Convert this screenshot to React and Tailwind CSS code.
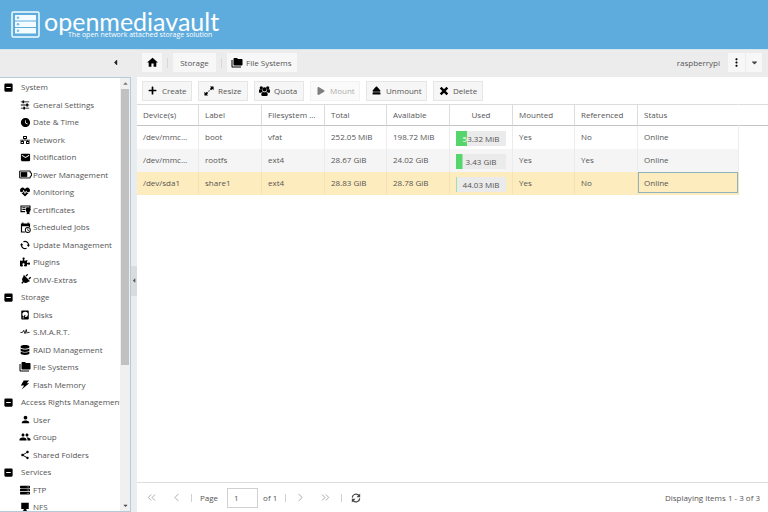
import { useState } from 'react';
import {
    MdWatchLater, MdEmail, MdPerson, MdGroup, MdShare, MdFolderCopy, MdHome, MdMoreVert,
} from 'react-icons/md';
import {
    FaNetworkWired, FaHeartbeat, FaPlug, FaPuzzlePiece, FaDatabase, FaServer, FaPlus,
    FaEject, FaPlay, FaCaretDown, FaCaretLeft, FaCaretUp,
} from 'react-icons/fa';
import { ChevronLeft, ChevronRight, ChevronsLeft, ChevronsRight } from 'lucide-react';

function Icon({ children, className = 'size-[10px]' }) {
    return (
        <svg viewBox="0 0 24 24" fill="currentColor" className={className} aria-hidden="true">
            {children}
        </svg>
    );
}

const SlidersIcon = () => (
    <Icon>
        <path d="M2 3.500h20v2H2zM2 11h20v2H2zM2 18.500h20v2H2z" />
        <path d="M6 1h4v7H6zM15 8.500h4v7h-4zM8 16h4v7H8z" />
    </Icon>
);

const BatteryIcon = () => (
    <svg viewBox="0 0 30 20" className="h-[9px] w-[13px] shrink-0" aria-hidden="true">
        <path d="M1.500 2h24.500v4.500H29v7h-3V18H1.500z" fill="none" stroke="currentColor" strokeWidth="2.200" />
        <path d="M4 4.500h15v11H4z" fill="currentColor" />
    </svg>
);

const CertificateIcon = () => (
    <Icon className="size-[11px]">
        <path d="M1 3h22v7h-2.500V5.500h-17V15H11v3H1z" />
        <path d="M5 7h7v2.200H5zM5 11h6v2.200H5z" />
        <path d="M17 6l2 1.500 2.500-.3.500 2.500 2 1.800-1.500 2 .2 2.500-2 .8V23l-3-2-3 2v-6.200l-2-.8.2-2.500-1.400-2 1.800-1.800.5-2.500 2.500.3z" />
    </Icon>
);

const CalendarClockIcon = () => (
    <Icon className="size-[11px]">
        <path fillRule="evenodd" d="M5 1h2.500v2h9V1H19v2h3v8.500a7 7 0 0 0-3-1.300V9H4.500v11.500H10l1.500 2.500H2V3h3z" />
        <path fillRule="evenodd" d="M17 11a6.500 6.500 0 1 1 0 13 6.500 6.500 0 0 1 0-13zm0 2a4.500 4.500 0 1 0 0 9 4.500 4.500 0 0 0 0-9z" />
        <path d="M16.200 14h1.600v3l2.500 1.500-.8 1.400-3.300-2z" />
    </Icon>
);

const UpdateIcon = () => (
    <Icon>
        <path d="M8 4.500A8.500 8.500 0 0 1 20.500 13M16 19.500A8.500 8.500 0 0 1 3.500 11" fill="none" stroke="currentColor" strokeWidth="2.600" />
        <path d="M16 11.500h8l-4 5.500zM0 12.500h8L4 7z" />
    </Icon>
);

const DiskIcon = () => (
    <Icon>
        <path fillRule="evenodd" d="M5 1h14a2 2 0 0 1 2 2v18a2 2 0 0 1-2 2H5a2 2 0 0 1-2-2V3a2 2 0 0 1 2-2zm7 3a6.500 6.500 0 0 0-3.500 12l3-4.500 2 1.200-2 4.200A6.500 6.500 0 1 0 12 4zM6 18v2h4v-2z" />
    </Icon>
);

const PulseIcon = () => (
    <Icon>
        <path d="M1 13h5l3-5 3 8 3-10 2 9 2-2h4" fill="none" stroke="currentColor" strokeWidth="2" />
    </Icon>
);

const BoltIcon = () => (
    <Icon>
        <path d="M9 1h13l-6 7h6L4 23l6-10H2z" />
    </Icon>
);

const MonitorIcon = () => (
    <Icon>
        <path d="M3 2h18v15h-5l-2 3h3v2H7v-2h3l-2-3H3z" />
    </Icon>
);

const ResizeIcon = () => (
    <Icon>
        <path d="M14 1h9v9l-3-3-3 3-3-3 3-3zM10 23H1v-9l3 3 3-3 3 3-3 3z" />
        <path d="M10 12.500l2.500-2.500 1.500 1.500-2.500 2.500z" />
    </Icon>
);

const UsersIcon = () => (
    <Icon className="size-[12px]">
        <circle cx="5" cy="5" r="3.500" />
        <circle cx="19" cy="5" r="3.500" />
        <circle cx="12" cy="8.500" r="4.500" />
        <path d="M0 10q0-2 2-2h5q-1 3 1.500 5.500Q5 13.500 4.500 16H2q-2 0-2-2zM24 10q0-2-2-2h-5q1 3-1.500 5.500 3.500 0 4 2.500H22q2 0 2-2zM5 19q0-5 4-5 3 1.500 6 0 4 0 4 5v1q0 3-3 3H8q-3 0-3-3z" />
    </Icon>
);

const CrossIcon = () => (
    <Icon>
        <path d="M4 4l16 16M20 4L4 20" fill="none" stroke="currentColor" strokeWidth="6" />
    </Icon>
);

const RefreshIcon = () => (
    <Icon>
        <path d="M3 11a9 9 0 0 1 16-5M21 13a9 9 0 0 1-16 5" fill="none" stroke="currentColor" strokeWidth="3" />
        <path d="M22 1v9h-9zM2 23v-9h9z" />
    </Icon>
);

const ExpanderIcon = () => (
    <Icon className="size-[9px]">
        <path fillRule="evenodd" d="M4 1h16a3 3 0 0 1 3 3v16a3 3 0 0 1-3 3H4a3 3 0 0 1-3-3V4a3 3 0 0 1 3-3zm2 9.500v3h12v-3z" />
    </Icon>
);

const tree = [
    { label: 'System', group: true },
    { label: 'General Settings', icon: <SlidersIcon /> },
    { label: 'Date & Time', icon: <MdWatchLater size={11} /> },
    { label: 'Network', icon: <FaNetworkWired size={10} /> },
    { label: 'Notification', icon: <MdEmail size={11} /> },
    { label: 'Power Management', icon: <BatteryIcon /> },
    { label: 'Monitoring', icon: <FaHeartbeat size={10} /> },
    { label: 'Certificates', icon: <CertificateIcon /> },
    { label: 'Scheduled Jobs', icon: <CalendarClockIcon /> },
    { label: 'Update Management', icon: <UpdateIcon /> },
    { label: 'Plugins', icon: <FaPuzzlePiece size={10} /> },
    { label: 'OMV-Extras', icon: <FaPlug size={11} className="rotate-45" /> },
    { label: 'Storage', group: true },
    { label: 'Disks', icon: <DiskIcon /> },
    { label: 'S.M.A.R.T.', icon: <PulseIcon /> },
    { label: 'RAID Management', icon: <FaDatabase size={10} /> },
    { label: 'File Systems', icon: <MdFolderCopy size={12} /> },
    { label: 'Flash Memory', icon: <BoltIcon /> },
    { label: 'Access Rights Management', group: true },
    { label: 'User', icon: <MdPerson size={11} /> },
    { label: 'Group', icon: <MdGroup size={12} /> },
    { label: 'Shared Folders', icon: <MdShare size={10} /> },
    { label: 'Services', group: true },
    { label: 'FTP', icon: <FaServer size={10} /> },
    { label: 'NFS', icon: <MonitorIcon /> },
];

const actions = [
    { label: 'Create', icon: <FaPlus size={9} />, width: 'w-[50px]' },
    { label: 'Resize', icon: <ResizeIcon />, width: 'w-[50px]' },
    { label: 'Quota', icon: <UsersIcon />, width: 'w-[50px]' },
    { label: 'Mount', icon: <FaPlay size={8} />, width: 'w-[50px]', disabled: true },
    { label: 'Unmount', icon: <FaEject size={9} />, width: 'w-[61px]' },
    { label: 'Delete', icon: <CrossIcon />, width: 'w-[50px]' },
];

const columns = [
    { label: 'Device(s)', width: 'w-[62px]' },
    { label: 'Label', width: 'w-[63px]' },
    { label: 'Filesystem type', width: 'w-[63px]' },
    { label: 'Total', width: 'w-[62px]' },
    { label: 'Available', width: 'w-[63px]' },
    { label: 'Used', width: 'w-[63px]', center: true },
    { label: 'Mounted', width: 'w-[62px]' },
    { label: 'Referenced', width: 'w-[63px]' },
    { label: 'Status', width: 'w-[101px]' },
];

const rows = [
    { device: '/dev/mmcblk0p1', label: 'boot', type: 'vfat', total: '252.05 MiB', available: '198.72 MiB', used: '53.32 MiB', percent: 22, mounted: 'Yes', referenced: 'No' },
    { device: '/dev/mmcblk0p2', label: 'rootfs', type: 'ext4', total: '28.67 GiB', available: '24.02 GiB', used: '3.43 GiB', percent: 13, mounted: 'Yes', referenced: 'Yes' },
    { device: '/dev/sda1', label: 'share1', type: 'ext4', total: '28.83 GiB', available: '28.78 GiB', used: '44.03 MiB', percent: 1, mounted: 'Yes', referenced: 'No' },
];

function UsedBar({ text, percent }) {
    return (
        <div className="relative mx-[6px] mt-[5px] h-[15px] bg-[#ebebeb] text-center leading-[16px]">
            <span>{text}</span>
            {/* white copy of the label, only visible over the filled part */}
            <div
                className="absolute inset-0 bg-[#56d56c] text-white"
                style={{ clipPath: `inset(0 ${100 - percent}% 0 0)` }}
                aria-hidden="true"
            >
                {text}
            </div>
        </div>
    );
}

function Header() {
    return (
        <header className="flex h-[50px] shrink-0 items-center gap-[4px] border-b border-[#d6e6f1] bg-[#5eacdd] pl-[11px] text-white">
            <svg viewBox="0 0 29 27" className="h-[27px] w-[29px]" aria-hidden="true">
                <rect x="1" y="1" width="27" height="25" rx="1.500" fill="none" stroke="#f2fbff" strokeWidth="1.500" />
                {[4, 10.500, 17].map((y) => (
                    <g key={y}>
                        <rect x="4" y={y} width="21" height="5.500" rx="0.500" fill="#f2fbff" />
                        <circle cx="7" cy={y + 2.750} r="1.300" fill="#7fbde4" />
                    </g>
                ))}
            </svg>
            <div className="flex flex-col">
                <h1 className="h-[20px] font-[Lato] text-[25px] leading-[20px] whitespace-nowrap">openmediavault</h1>
                <p className="pl-[24px] text-[7px] leading-[8px] whitespace-nowrap">The open network attached storage solution</p>
            </div>
        </header>
    );
}

function NavBar() {
    return (
        <div className="flex h-[27px] shrink-0 items-center bg-[#ececec] pb-[2px]">
            <div className="flex w-[142px] shrink-0 justify-end pr-[22px]">
                <button type="button" aria-label="Collapse navigation" className="text-[#222]"><FaCaretLeft size={9} /></button>
            </div>
            <nav className="flex flex-1 items-center gap-[5px]">
                <button type="button" aria-label="Home" className="flex h-[19px] w-[20px] items-center justify-center bg-[#f7f7f7] text-black"><MdHome size={13} /></button>
                <span className="h-[10px] w-px bg-[#d8d8d8]" />
                <button type="button" className="h-[19px] w-[43px] bg-[#f7f7f7]">Storage</button>
                <span className="h-[10px] w-px bg-[#d8d8d8]" />
                <button type="button" className="flex h-[19px] w-[70px] items-center gap-[3px] bg-[#f7f7f7] pl-[4px]">
                    <MdFolderCopy size={12} className="text-black" />
                    File Systems
                </button>
            </nav>
            <span>raspberrypi</span>
            <div className="ml-[8px] flex gap-px pr-[6px]">
                <button type="button" aria-label="Menu" className="flex h-[19px] w-[17px] items-center justify-center bg-[#f7f7f7] text-black"><MdMoreVert size={13} /></button>
                <button type="button" aria-label="User menu" className="flex h-[19px] w-[16px] items-center justify-center bg-[#f7f7f7] text-[#444]"><FaCaretDown size={9} /></button>
            </div>
        </div>
    );
}

function Sidebar() {
    return (
        <aside className="flex w-[131px] shrink-0 border-t border-r border-b border-[#b5ccd8] bg-white">
            <nav className="min-w-0 flex-1 overflow-hidden">
                {tree.map((item) =>
                    item.group ? (
                        <button key={item.label} type="button" className="flex w-full items-center gap-[8px] pl-[4px] whitespace-nowrap odd:h-[18px] even:h-[17px]">
                            <span className="shrink-0 text-black"><ExpanderIcon /></span>
                            {item.label}
                        </button>
                    ) : (
                        <a key={item.label} href="#" className="flex items-center gap-[1px] pl-[18px] whitespace-nowrap odd:h-[18px] even:h-[17px]">
                            <span className="flex w-[14px] shrink-0 justify-center text-black">{item.icon}</span>
                            {item.label}
                        </a>
                    )
                )}
            </nav>
            <div className="flex w-[10px] shrink-0 flex-col items-center bg-[#f0f0f0] text-[#777]">
                <FaCaretUp size={7} className="my-[2px] shrink-0" />
                <div className="h-[276px] w-[8px] bg-[#c1c1c1]" />
                <FaCaretDown size={7} className="mt-auto mb-[2px] shrink-0 text-[#444]" />
            </div>
        </aside>
    );
}

function FileSystemTable({ selected, onSelect }) {
    return (
        <table className="w-full table-fixed border-separate border-spacing-0 text-left">
            <colgroup>
                {columns.map((c) => <col key={c.label} className={c.width} />)}
                <col />
            </colgroup>
            <thead>
                <tr className="h-[22px]">
                    {columns.map((c) => (
                        <th
                            key={c.label}
                            className={`truncate border-t border-r border-b border-t-[#dcdcdc] border-b-[#c4c4c4] px-[6px] font-normal ${c.center ? 'text-center' : ''} ${c.label === 'Status' ? 'border-r-transparent' : 'border-r-[#dcdcdc]'}`}
                        >
                            {c.label}
                        </th>
                    ))}
                    <td className="border-t border-b border-t-[#dcdcdc] border-b-[#c4c4c4]" />
                </tr>
            </thead>
            <tbody>
                {rows.map((row, i) => {
                    const active = i === selected;
                    const colors = active ? 'bg-[#fdecbd] border-[#f3e3b6]' : i % 2 ? 'bg-[#f5f5f5] border-[#ececec]' : 'bg-white border-[#ececec]';
                    const cell = `truncate border-r px-[6px] pt-0 pb-[2px] ${colors}`;
                    return (
                        <tr key={row.device} onClick={() => onSelect(i)} className="h-[23px]">
                            <td className={cell}>{row.device}</td>
                            <td className={cell}>{row.label}</td>
                            <td className={cell}>{row.type}</td>
                            <td className={cell}>{row.total}</td>
                            <td className={cell}>{row.available}</td>
                            <td className={`border-r p-0 align-top ${colors}`}>
                                <UsedBar text={row.used} percent={row.percent} />
                            </td>
                            <td className={cell}>{row.mounted}</td>
                            <td className={cell}>{row.referenced}</td>
                            <td className={`border-r px-0 pt-0 pb-[2px] ${colors}`}>
                                <div className={`h-[21px] border px-[5px] leading-[19px] ${active ? 'border-[#8fb3bd]' : 'border-transparent'}`}>Online</div>
                            </td>
                            <td />
                        </tr>
                    );
                })}
            </tbody>
        </table>
    );
}

function Pager() {
    const [page, setPage] = useState('1');
    return (
        <footer className="flex h-[30px] shrink-0 items-center border-t border-[#dedede] pr-[8px] pl-[8px]">
            <div className="flex items-center gap-[12px] text-[#999]">
                <button type="button" aria-label="First page"><ChevronsLeft size={13} strokeWidth={1.5} /></button>
                <button type="button" aria-label="Previous page"><ChevronLeft size={13} strokeWidth={1.5} /></button>
            </div>
            <span className="mx-[8px] h-[8px] w-px bg-[#d0d0d0]" />
            <label htmlFor="page">Page</label>
            <input
                id="page"
                value={page}
                onChange={(e) => setPage(e.target.value)}
                className="mr-[5px] ml-[9px] h-[20px] w-[31px] border border-[#d0d0d0] px-[6px]"
            />
            <span>of 1</span>
            <span className="mx-[8px] h-[8px] w-px bg-[#d0d0d0]" />
            <div className="flex items-center gap-[12px] text-[#999]">
                <button type="button" aria-label="Next page"><ChevronRight size={13} strokeWidth={1.5} /></button>
                <button type="button" aria-label="Last page"><ChevronsRight size={13} strokeWidth={1.5} /></button>
            </div>
            <span className="mx-[9px] h-[8px] w-px bg-[#d0d0d0]" />
            <button type="button" aria-label="Refresh" className="text-[#444]"><RefreshIcon /></button>
            <span className="ml-auto">Displaying items 1 - 3 of 3</span>
        </footer>
    );
}

export default function App() {
    const [selected, setSelected] = useState(2);

    return (
        <div className="flex h-screen flex-col overflow-hidden bg-white font-['Open_Sans',sans-serif] text-[8px] text-[#555]">
            <Header />
            <NavBar />
            <div className="flex min-h-0 flex-1">
                <Sidebar />
                {/* Splitter */}
                <div className="flex w-[6px] shrink-0 items-center bg-[#e9edef] pb-[28px]">
                    <button type="button" aria-label="Toggle sidebar" className="flex h-[30px] w-full items-center justify-center bg-[#d9dcde] text-[#555]">
                        <FaCaretLeft size={7} />
                    </button>
                </div>
                <main className="flex min-w-0 flex-1 flex-col">
                    <div className="flex h-[27px] shrink-0 items-center gap-[6px] pl-[5px]">
                        {actions.map((a) => (
                            <button
                                key={a.label}
                                type="button"
                                disabled={a.disabled}
                                className={`flex h-[20px] shrink-0 items-center gap-[4px] border border-[#e6e6e6] bg-[#f6f6f6] pl-[4px] disabled:opacity-50 ${a.width}`}
                            >
                                <span className="flex w-[11px] shrink-0 justify-center text-black">{a.icon}</span>
                                {a.label}
                            </button>
                        ))}
                    </div>
                    <FileSystemTable selected={selected} onSelect={setSelected} />
                    <div className="flex-1" />
                    <Pager />
                </main>
            </div>
        </div>
    );
}
